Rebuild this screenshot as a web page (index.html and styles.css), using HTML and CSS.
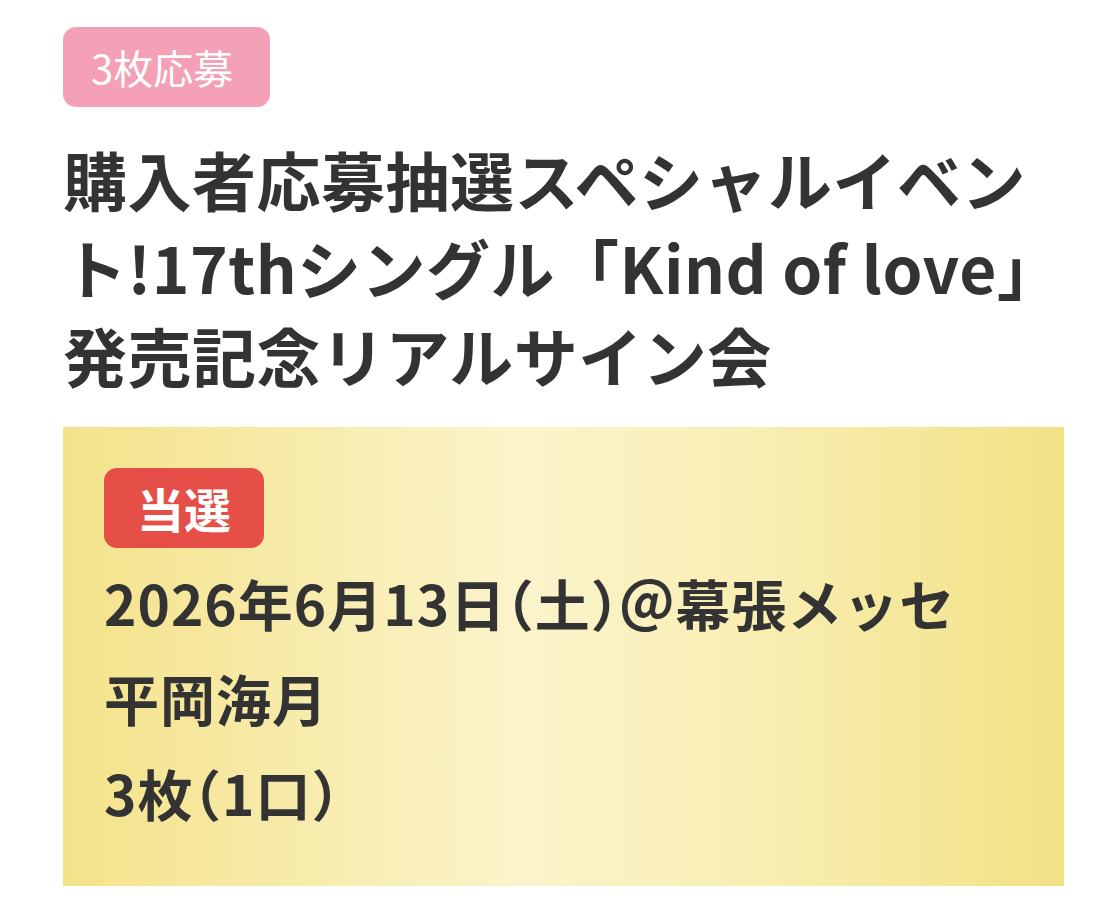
FILE: index.html
```html
<!DOCTYPE html>
<html lang="ja">
<head>
<meta charset="utf-8">
<title>当選</title>
<link rel="stylesheet" href="styles.css">
</head>
<body>
<main class="page">
  <div class="entry-badge">3枚応募</div>
  <h1 class="title">購入者応募抽選スペシャルイベント!17thシングル「Kind of love」発売記念リアルサイン会</h1>
  <section class="result">
    <div class="win-badge">当選</div>
    <p class="detail">2026年6月13日（土）＠幕張メッセ</p>
    <p class="detail">平岡海月</p>
    <p class="detail">3枚（1口）</p>
  </section>
</main>
</body>
</html>
```
FILE: styles.css
```css
html, body {
  margin: 0;
  padding: 0;
  background: #ffffff;
}
body {
  font-family: "Noto Sans CJK JP", "Noto Sans", sans-serif;
  color: #333333;
}
.page {
  padding: 27px 49px 0 63px;
  display: flex;
  flex-direction: column;
  align-items: flex-start;
}
.entry-badge {
  background: #f4a0b6;
  color: #ffffff;
  font-size: 40px;
  font-weight: 400;
  height: 80px;
  line-height: 80px;
  padding: 0 0 0 28px;
  border-radius: 13px;
  box-sizing: border-box;
  width: 207px;
  white-space: nowrap;
}
.title {
  margin: 27px 0 29px 0;
  font-size: 64px;
  font-weight: 700;
  line-height: 88px;
  letter-spacing: 0.5px;
  width: 1001px;
  color: #333333;
}
.result {
  width: 1001px;
  box-sizing: border-box;
  padding: 41px 41px 46px 41px;
  background: linear-gradient(90deg, #f4e28a 0%, #fbf4cb 46%, #f8eeb2 70%, #f2e184 100%);
  display: flex;
  flex-direction: column;
  align-items: flex-start;
}
.win-badge {
  background: #e64f48;
  color: #ffffff;
  font-size: 47px;
  font-weight: 700;
  height: 80px;
  line-height: 80px;
  width: 160px;
  text-align: center;
  border-radius: 13px;
  margin-bottom: 7px;
}
.detail {
  margin: 0;
  font-size: 55px;
  font-weight: 700;
  line-height: 95px;
  letter-spacing: 1px;
  font-feature-settings: "halt" 1;
  white-space: nowrap;
}
```
